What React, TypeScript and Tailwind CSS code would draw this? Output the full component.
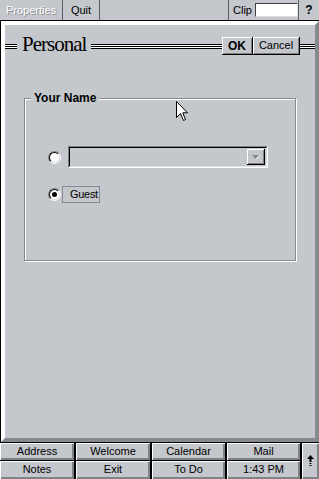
import React from "react";

const bevel = "bg-[#c4c7cb] shadow-[inset_1px_1px_0_#fff,inset_-2px_-2px_0_#7f8286]";

function Lines({ className = "" }: { className?: string }) {
  return (
    <div className={"flex flex-col " + className}>
      <div className="h-px bg-black" />
      <div className="h-px bg-white" />
      <div className="h-px bg-black" />
      <div className="h-px bg-white" />
      <div className="h-px bg-black" />
    </div>
  );
}

function Radio({ checked }: { checked?: boolean }) {
  return (
    <div className="w-[13px] h-[13px] flex-none rounded-full border border-t-[#808080] border-l-[#808080] border-r-white border-b-white">
      <div className="w-full h-full rounded-full bg-white border border-t-black border-l-black border-r-[#dfdfdf] border-b-[#dfdfdf] flex items-center justify-center">
        {checked && <div className="w-[5px] h-[5px] rounded-full bg-black" />}
      </div>
    </div>
  );
}

function BottomButton({ label }: { label: string }) {
  return (
    <div className={"flex items-center justify-center pb-px text-[11px] text-black " + bevel}>
      {label}
    </div>
  );
}

export default function App() {
  return (
    <div className="relative w-[319px] h-[479px] flex flex-col bg-white font-['Liberation_Sans',Arial,sans-serif] text-black select-none overflow-hidden">
      {/* top bar */}
      <div className="flex h-[21px] flex-none border-b border-black bg-[#c4c7cb] text-[11px]">
        <div className="w-[63px] border-r border-[#5a5c60] flex items-center justify-center text-white [text-shadow:1px_1px_0_#8a8d91]">
          Properties
        </div>
        <div className="w-[37px] border-r border-[#5a5c60] flex items-center justify-center">Quit</div>
        <div className="flex-1" />
        <div className="w-[70px] border-l border-[#5a5c60] flex items-center pl-[4px] gap-[3px]">
          <span>Clip</span>
          <div className="w-[43px] h-[14px] bg-white border border-t-[#404040] border-l-[#404040] border-r-[#e0e0e0] border-b-[#e0e0e0]" />
        </div>
        <div className="w-[21px] border-l border-[#5a5c60] flex items-center justify-center font-bold text-[12px]">?</div>
      </div>

      {/* main panel */}
      <div className="flex-1 flex border-l border-black">
        <div className="flex-1 flex flex-col border-4 border-t-white border-l-white border-r-[#86898d] border-b-[#86898d] bg-[#c4c7cb]">
          <div className="flex items-center h-[18px] mt-[12px]">
            <Lines className="w-[12px]" />
            <span className="ml-[5px] mr-[5px] font-['Liberation_Serif','Times_New_Roman',serif] text-[21px] leading-none tracking-[-1px] -mt-[4px]">
              Personal
            </span>
            <Lines className="flex-1" />
            <div className="flex h-[18px]">
              <div className="w-[31px] flex items-center justify-center font-bold text-[12px] border-r border-b border-black shadow-[inset_1px_1px_0_#fff,inset_-1px_-1px_0_#808080]">
                OK
              </div>
              <div className="w-[47px] flex items-center justify-center text-[11px] border-r border-b border-black shadow-[inset_1px_1px_0_#fff,inset_-1px_-1px_0_#808080]">
                Cancel
              </div>
            </div>
            <Lines className="w-[15px]" />
          </div>

          <div className="relative ml-[19px] mt-[43px] w-[272px] h-[163px] border border-[#86898d] shadow-[inset_1px_1px_0_#fff,1px_1px_0_#fff] pl-[23px] pt-[47px]">
            <span className="absolute left-[6px] -top-[8px] px-[3px] bg-[#c4c7cb] text-[12px] font-bold leading-[14px]">
              Your Name
            </span>
            <div className="flex items-center gap-[7px]">
              <Radio />
              <div className="w-[200px] h-[22px] border border-t-[#808080] border-l-[#808080] border-r-white border-b-white">
                <div className="w-full h-full border border-t-black border-l-black border-r-[#dfdfdf] border-b-[#dfdfdf] flex justify-end p-px">
                  <div className="w-[18px] h-full flex items-center justify-center border-r border-b border-black shadow-[inset_1px_1px_0_#fff,inset_-1px_-1px_0_#808080]">
                    <svg width="9" height="6" viewBox="0 0 9 6">
                      <path d="M1 1 L8 1 L4.5 5 Z" fill="#86898d" />
                      <path d="M8.5 1.5 L5 5.5" stroke="#fff" strokeWidth="1" />
                    </svg>
                  </div>
                </div>
              </div>
            </div>
            <div className="flex items-center gap-[1px] mt-[18px]">
              <Radio checked />
              <div className="h-[17px] w-[38px] border border-[#86898d] flex items-center pl-[7px] text-[11px] tracking-[-0.3px]">
                Guest
              </div>
            </div>
          </div>
        </div>
      </div>

      {/* bottom buttons */}
      <div className="flex flex-none h-[37px] bg-black pt-px gap-[2px]">
        <div className="grid grid-cols-[74px_74px_73px_73px] grid-rows-[17px_18px] gap-x-[2px] gap-y-px">
          <BottomButton label="Address" />
          <BottomButton label="Welcome" />
          <BottomButton label="Calendar" />
          <BottomButton label="Mail" />
          <BottomButton label="Notes" />
          <BottomButton label="Exit" />
          <BottomButton label="To Do" />
          <BottomButton label="1:43 PM" />
        </div>
        <div className={"flex-1 flex items-center justify-center " + bevel}>
          <svg width="7" height="12" viewBox="0 0 7 12">
            <path d="M3.5 0 L7 4 L0 4 Z" fill="black" />
            <rect x="2.5" y="4" width="2" height="3" fill="black" />
            <rect x="2.5" y="8" width="2" height="1" fill="black" />
            <rect x="2.5" y="10" width="2" height="1" fill="black" />
          </svg>
        </div>
      </div>

      {/* mouse cursor */}
      <svg className="absolute left-[176px] top-[101px]" width="13" height="21" viewBox="0 0 13 21">
        <path d="M0.5 0.5 L0.5 16.5 L4.5 12.5 L7.5 19.5 L9.5 18.5 L6.8 11.8 L11.5 11.8 Z" fill="#fff" stroke="#000" strokeWidth="1" strokeLinejoin="miter" />
      </svg>
    </div>
  );
}
